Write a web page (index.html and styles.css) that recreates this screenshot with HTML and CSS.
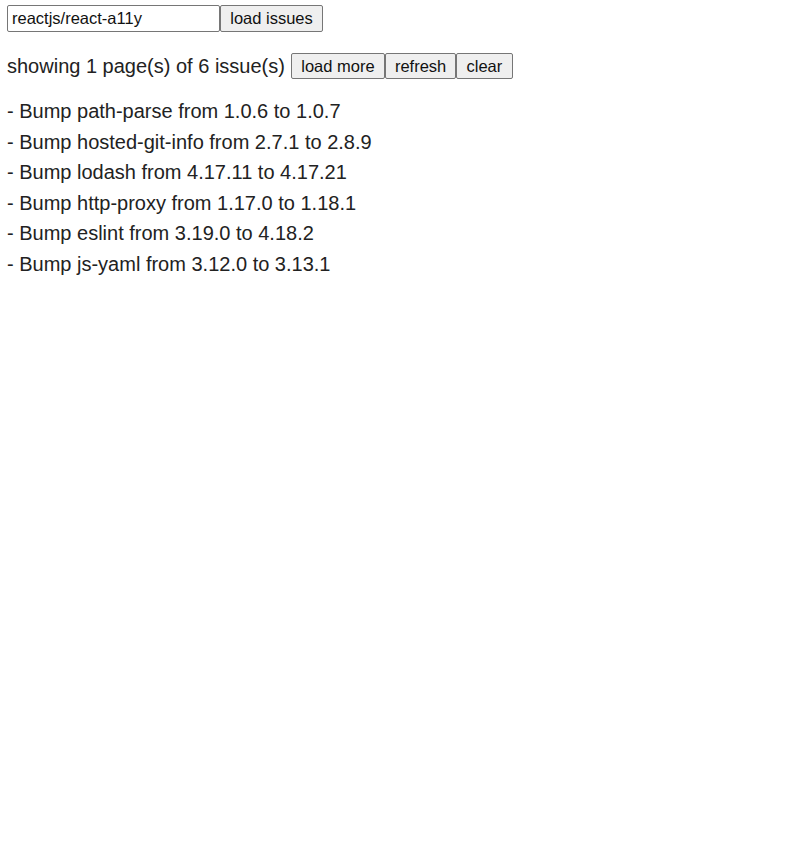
FILE: index.html
```html
<!DOCTYPE html>
<html>
<head>
<meta charset="utf-8">
<link rel="stylesheet" href="styles.css">
</head>
<body>
<div class="search">
  <input class="repo" type="text" value="reactjs/react-a11y"><button class="btn btn-load">load issues</button>
</div>
<div class="status">
  <span class="status-text">showing 1 page(s) of 6 issue(s)</span>
  <div class="actions"><button class="btn btn-more">load more</button><button class="btn btn-refresh">refresh</button><button class="btn btn-clear">clear</button></div>
</div>
<div class="issues">
  <div class="issue">- Bump path-parse from 1.0.6 to 1.0.7</div>
  <div class="issue">- Bump hosted-git-info from 2.7.1 to 2.8.9</div>
  <div class="issue">- Bump lodash from 4.17.11 to 4.17.21</div>
  <div class="issue">- Bump http-proxy from 1.17.0 to 1.18.1</div>
  <div class="issue">- Bump eslint from 3.19.0 to 4.18.2</div>
  <div class="issue">- Bump js-yaml from 3.12.0 to 3.13.1</div>
</div>
</body>
</html>
```
FILE: styles.css
```css
html, body {
  margin: 0;
  background: #fff;
}
body {
  padding: 5px 7px;
  font-family: "Liberation Sans", Arial, sans-serif;
  color: #222;
}
.search {
  display: flex;
  height: 27px;
}
.repo {
  box-sizing: border-box;
  width: 213px;
  height: 27px;
  margin: 0;
  padding: 0 4px;
  border: 1px solid #767676;
  border-radius: 2px;
  font-family: "Liberation Sans", Arial, sans-serif;
  font-size: 16.5px;
  color: #111;
  outline: none;
}
.btn {
  box-sizing: border-box;
  margin: 0;
  height: 27px;
  padding: 0 9px;
  border: 1px solid #767676;
  border-radius: 2px;
  background: #efefef;
  font-family: "Liberation Sans", Arial, sans-serif;
  font-size: 16.5px;
  color: #111;
}
.btn-load { width: 103px; }
.status {
  display: flex;
  align-items: center;
  margin-top: 21px;
  height: 26px;
}
.status-text {
  font-size: 20px;
  margin-right: 6px;
}
.actions {
  display: flex;
}
.actions .btn { height: 26px; }
.btn-more { width: 94px; }
.btn-refresh { width: 71px; }
.btn-clear { width: 57px; }
.issues {
  margin-top: 17px;
}
.issue {
  font-size: 20px;
  line-height: 30.6px;
}
```
